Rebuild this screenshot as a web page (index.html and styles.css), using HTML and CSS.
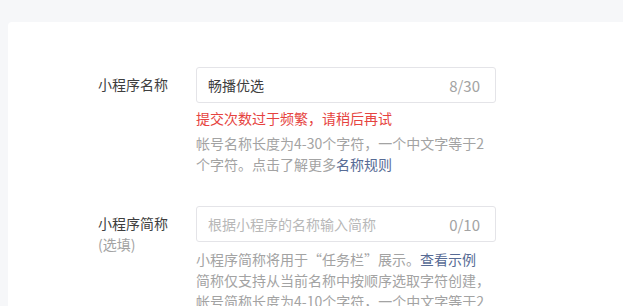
FILE: index.html
```html
<!DOCTYPE html>
<html lang="zh-CN">
<head>
    <meta charset="UTF-8">
    <title>小程序信息</title>
    <link rel="stylesheet" href="styles.css">
</head>
<body>
    <div class="page">
        <div class="card">
            <div class="form-item">
                <label class="form-label"><span class="label-text">小程序名称</span></label>
                <div class="form-control">
                    <div class="input-box">
                        <input class="input" type="text" value="畅播优选">
                        <span class="counter">8/30</span>
                    </div>
                    <div class="form-error">提交次数过于频繁，请稍后再试</div>
                    <div class="form-tips tips-first">帐号名称长度为4-30个字符，一个中文字等于2个字符。点击了解更多<a href="#" class="link">名称规则</a></div>
                </div>
            </div>

            <div class="form-item">
                <label class="form-label"><span class="label-text">小程序简称<span class="optional">(选填)</span></span></label>
                <div class="form-control">
                    <div class="input-box">
                        <input class="input" type="text" placeholder="根据小程序的名称输入简称">
                        <span class="counter">0/10</span>
                    </div>
                    <div class="form-tips tips-loose">
                        <p>小程序简称将用于“任务栏”展示。<a href="#" class="link">查看示例</a></p>
                        <p>简称仅支持从当前名称中按顺序选取字符创建，</p>
                        <p>帐号简称长度为4-10个字符，一个中文字等于2个字符。</p>
                    </div>
                </div>
            </div>
        </div>
    </div>
</body>
</html>
```

FILE: styles.css
```css
:root {
    --bg-page: #f6f7f9;
    --bg-card: #ffffff;
    --text-main: #3e3e3e;
    --text-tips: #a3a3a3;
    --text-placeholder: #b8b8b8;
    --border: #e4e4e8;
    --error: #e64340;
    --link: #576b95;
}
* {
    margin: 0;
    padding: 0;
    box-sizing: border-box;
}
body {
    font-family: "Microsoft YaHei", "Noto Sans CJK SC", "Noto Sans", sans-serif;
    font-size: 14px;
    line-height: 21px;
    color: var(--text-main);
    background-color: var(--bg-page);
    overflow: hidden;
}
.page {
    padding: 22px 0 0 8px;
}
.card {
    background-color: var(--bg-card);
    border-radius: 4px 0 0 0;
    padding: 45px 0 0 40px;
    min-height: 300px;
}
.form-item {
    display: flex;
    align-items: flex-start;
    margin-bottom: 31px;
}
.form-label {
    width: 120px;
    margin-right: 28px;
    padding-top: 7px;
    text-align: right;
    color: var(--text-main);
}
.label-text {
    display: inline-block;
    text-align: left;
}
.optional {
    display: block;
    color: var(--text-tips);
}
.form-control {
    width: 300px;
}
.input-box {
    display: flex;
    align-items: center;
    height: 36px;
    border: 1px solid var(--border);
    border-radius: 3px;
    padding: 0 15px 0 11px;
}
.input {
    flex: 1;
    min-width: 0;
    border: none;
    outline: none;
    background: transparent;
    font: inherit;
    color: var(--text-main);
}
.input::placeholder {
    color: var(--text-placeholder);
}
.counter {
    color: var(--text-tips);
    font-size: 15px;
}
.form-error {
    margin-top: 5px;
    color: var(--error);
}
.form-tips {
    color: var(--text-tips);
}
.tips-first {
    margin-top: 4px;
}
.tips-loose {
    margin-top: 7px;
}
.link {
    color: var(--link);
    text-decoration: none;
}
```
